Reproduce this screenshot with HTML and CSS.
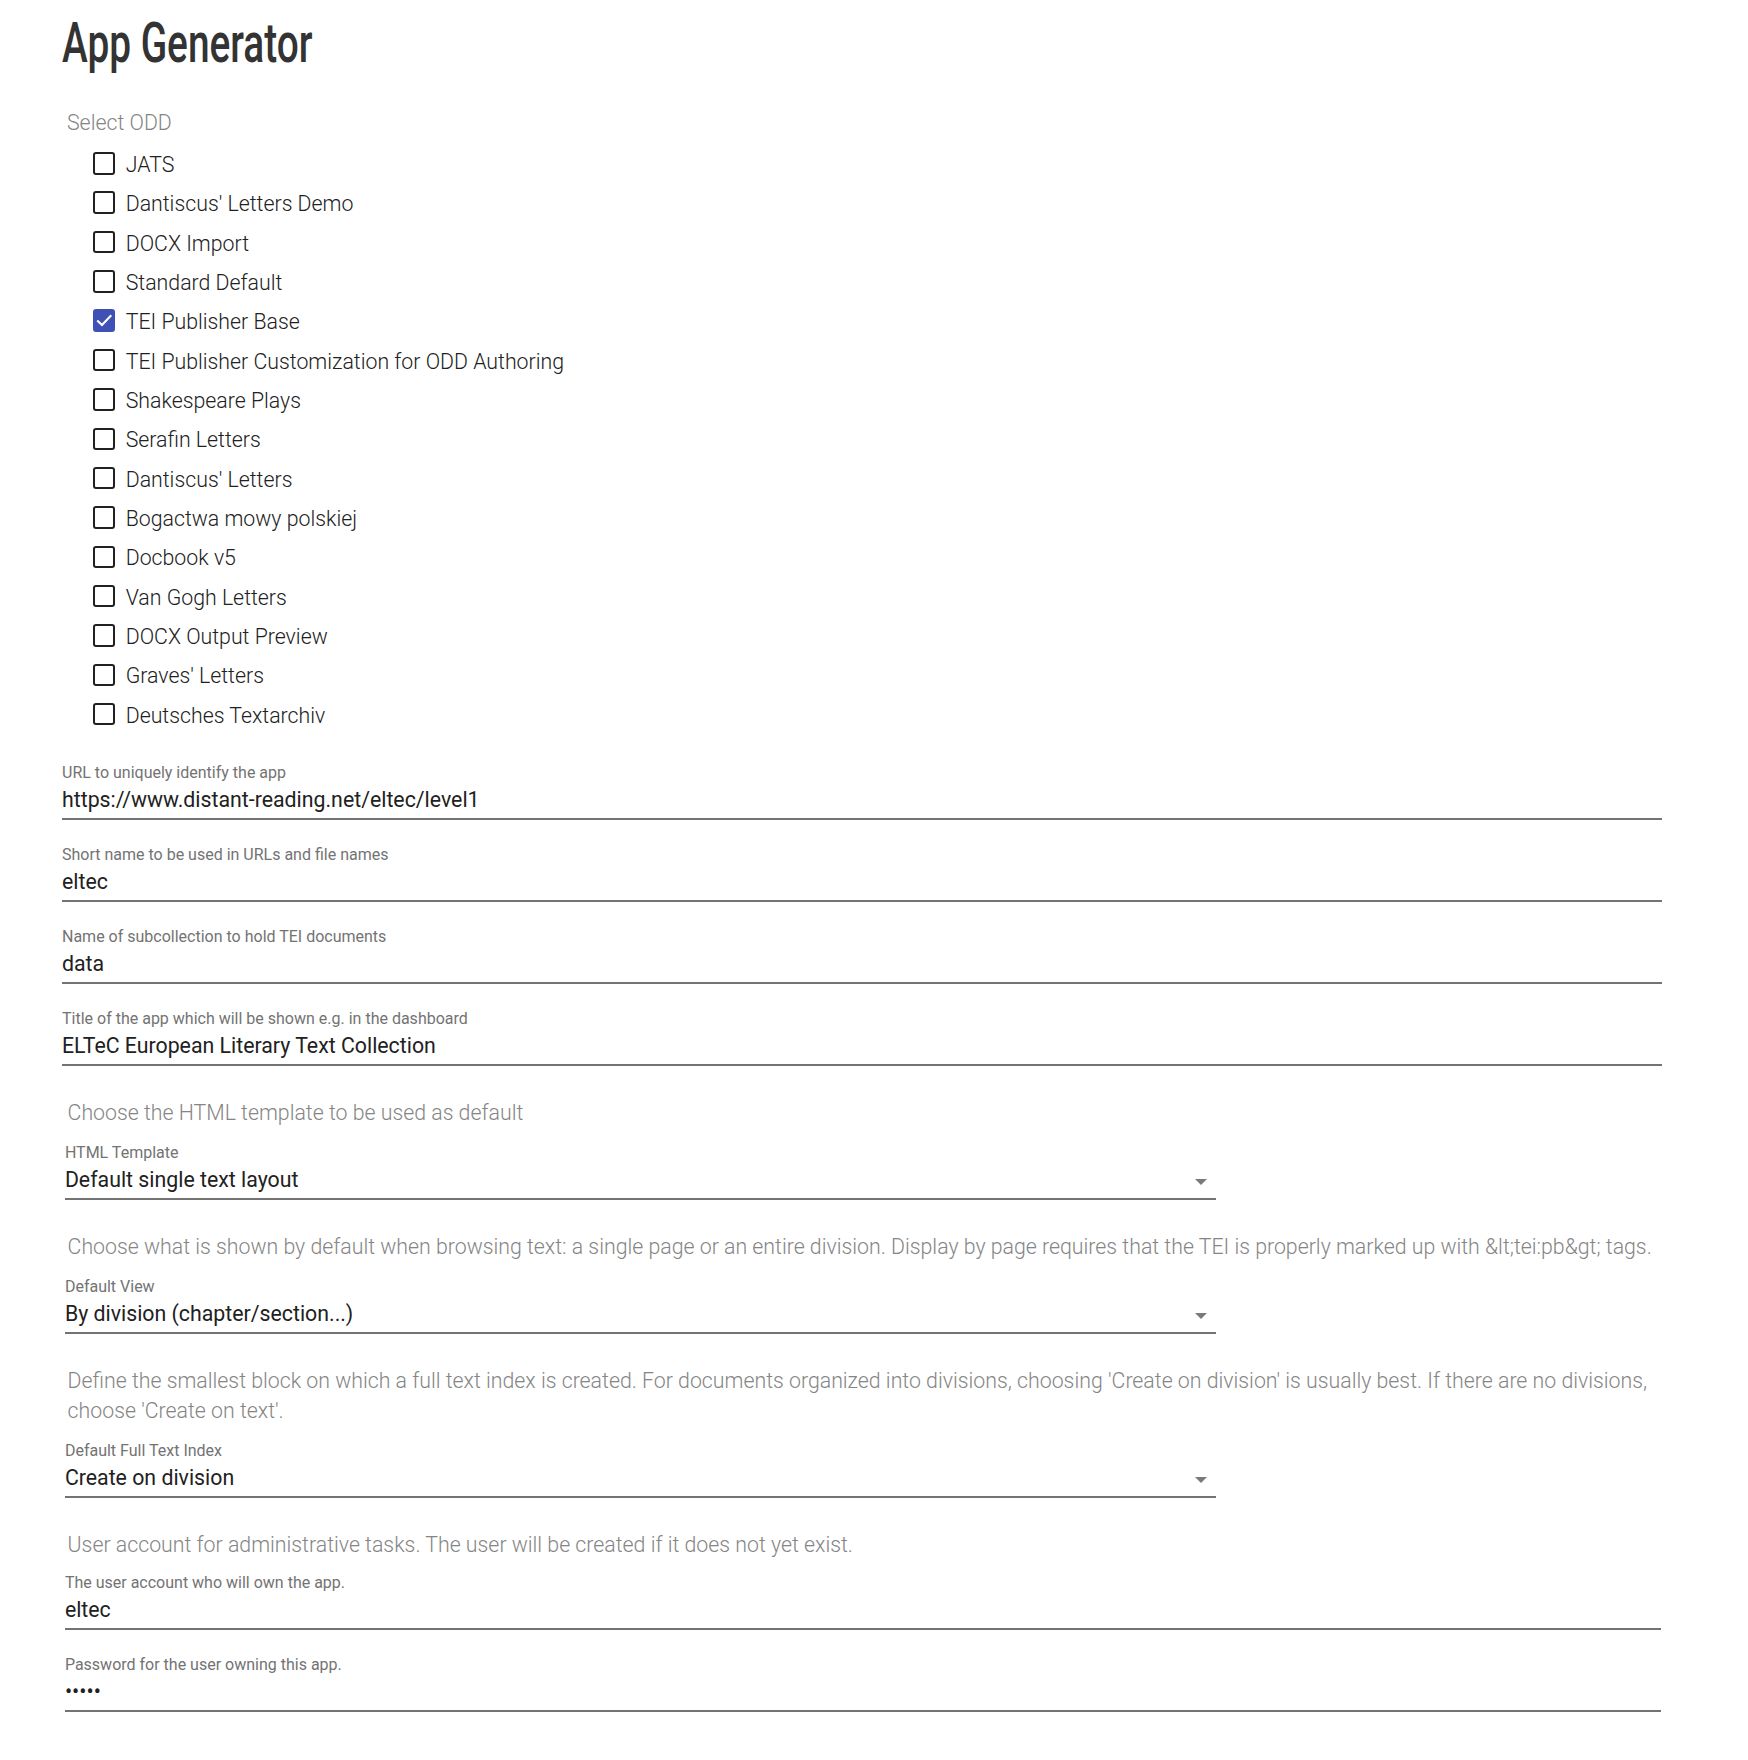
FILE: index.html
```html
<!DOCTYPE html>
<html lang="en">
<head>
<meta charset="utf-8">
<title>App Generator</title>
<link rel="stylesheet" href="styles.css">
</head>
<body>
<main class="page">
  <h1 class="title">App Generator</h1>

  <div class="section-label">Select ODD</div>
  <ul class="odd-list">
    <li class="odd-item"><span class="box"></span><span>JATS</span></li>
    <li class="odd-item"><span class="box"></span><span>Dantiscus' Letters Demo</span></li>
    <li class="odd-item"><span class="box"></span><span>DOCX Import</span></li>
    <li class="odd-item"><span class="box"></span><span>Standard Default</span></li>
    <li class="odd-item"><span class="box checked"><svg viewBox="0 0 18 18" width="22.5" height="22.5"><polyline points="3.4,9.2 7.2,12.8 14.6,5" fill="none" stroke="#fff" stroke-width="1.7"/></svg></span><span>TEI Publisher Base</span></li>
    <li class="odd-item"><span class="box"></span><span>TEI Publisher Customization for ODD Authoring</span></li>
    <li class="odd-item"><span class="box"></span><span>Shakespeare Plays</span></li>
    <li class="odd-item"><span class="box"></span><span>Serafin Letters</span></li>
    <li class="odd-item"><span class="box"></span><span>Dantiscus' Letters</span></li>
    <li class="odd-item"><span class="box"></span><span>Bogactwa mowy polskiej</span></li>
    <li class="odd-item"><span class="box"></span><span>Docbook v5</span></li>
    <li class="odd-item"><span class="box"></span><span>Van Gogh Letters</span></li>
    <li class="odd-item"><span class="box"></span><span>DOCX Output Preview</span></li>
    <li class="odd-item"><span class="box"></span><span>Graves' Letters</span></li>
    <li class="odd-item"><span class="box"></span><span>Deutsches Textarchiv</span></li>
  </ul>

  <div class="field first">
    <div class="field-label">URL to uniquely identify the app</div>
    <div class="field-value">https://www.distant-reading.net/eltec/level1</div>
    <div class="underline"></div>
  </div>
  <div class="field">
    <div class="field-label">Short name to be used in URLs and file names</div>
    <div class="field-value">eltec</div>
    <div class="underline"></div>
  </div>
  <div class="field">
    <div class="field-label">Name of subcollection to hold TEI documents</div>
    <div class="field-value">data</div>
    <div class="underline"></div>
  </div>
  <div class="field">
    <div class="field-label">Title of the app which will be shown e.g. in the dashboard</div>
    <div class="field-value">ELTeC European Literary Text Collection</div>
    <div class="underline"></div>
  </div>

  <p class="desc">Choose the HTML template to be used as default</p>
  <div class="field select">
    <div class="field-label">HTML Template</div>
    <div class="field-value"><span>Default single text layout</span><span class="arrow"></span></div>
    <div class="underline"></div>
  </div>

  <p class="desc nowrap">Choose what is shown by default when browsing text: a single page or an entire division. Display by page requires that the TEI is properly marked up with &amp;lt;tei:pb&amp;gt; tags.</p>
  <div class="field select">
    <div class="field-label">Default View</div>
    <div class="field-value"><span>By division (chapter/section...)</span><span class="arrow"></span></div>
    <div class="underline"></div>
  </div>

  <p class="desc">Define the smallest block on which a full text index is created. For documents organized into divisions, choosing 'Create on division' is usually best. If there are no divisions,<br>choose 'Create on text'.</p>
  <div class="field select">
    <div class="field-label">Default Full Text Index</div>
    <div class="field-value"><span>Create on division</span><span class="arrow"></span></div>
    <div class="underline"></div>
  </div>

  <p class="desc user-desc">User account for administrative tasks. The user will be created if it does not yet exist.</p>
  <div class="field user">
    <div class="field-label">The user account who will own the app.</div>
    <div class="field-value">eltec</div>
    <div class="underline"></div>
  </div>
  <div class="field user">
    <div class="field-label">Password for the user owning this app.</div>
    <div class="field-value password">•••••</div>
    <div class="underline"></div>
  </div>
</main>
</body>
</html>
```

FILE: styles.css
```css
body {
  margin: 0;
  background: #ffffff;
  font-family: Roboto, "Noto Sans", sans-serif;
}

.page {
  width: 1600px;
  padding: 0 0 40px 62px;
}

.title {
  margin: 11px 0 0;
  font-family: Roboto, sans-serif;
  font-weight: 500;
  font-size: 56px;
  line-height: 64px;
  color: #333333;
  white-space: nowrap;
  transform: scaleX(0.693);
  transform-origin: left center;
}

.section-label {
  margin: 33px 0 0 5px;
  font-weight: 300;
  font-size: 21.3px;
  line-height: 30px;
  color: #858585;
}

.odd-list {
  list-style: none;
  margin: 5.7px 0 0;
  padding: 0 0 0 30.7px;
}

.odd-item {
  height: 39.35px;
  display: flex;
  align-items: center;
  gap: 10.5px;
  font-weight: 300;
  font-size: 21.3px;
  line-height: 24px;
  color: #212121;
}

.odd-item > span:last-child {
  padding-top: 3px;
}

.box {
  flex: none;
  width: 22.5px;
  height: 22.5px;
  box-sizing: border-box;
  border: 2.5px solid #212121;
  border-radius: 3px;
}

.box.checked {
  border: none;
  background: #3f51b5;
  display: flex;
}

.field {
  margin-top: 27px;
}

.field.first {
  margin-top: 30.7px;
}

.field-label {
  font-size: 16px;
  line-height: 16px;
  color: #737373;
}

.field-value {
  margin-top: 7.5px;
  font-size: 21.3px;
  line-height: 24px;
  height: 24px;
  color: #212121;
  display: flex;
  justify-content: space-between;
  align-items: center;
  white-space: nowrap;
}

.underline {
  margin-top: 5.5px;
  height: 2px;
  background: #737373;
}

.desc {
  margin: 32px 0 0 5.6px;
  font-weight: 300;
  font-size: 21.3px;
  line-height: 30px;
  color: #858585;
}

.desc.nowrap {
  white-space: nowrap;
}

.desc + .field {
  margin-top: 17px;
}

.desc.user-desc + .field {
  margin-top: 15px;
}

.field.select {
  margin-left: 2.9px;
  width: 1151px;
}

.field.user {
  margin-left: 2.9px;
  width: 1596px;
}

.arrow {
  width: 0;
  height: 0;
  margin: 4px 9px 0 0;
  border-left: 6.25px solid transparent;
  border-right: 6.25px solid transparent;
  border-top: 6.25px solid #7a7a7a;
}
```
